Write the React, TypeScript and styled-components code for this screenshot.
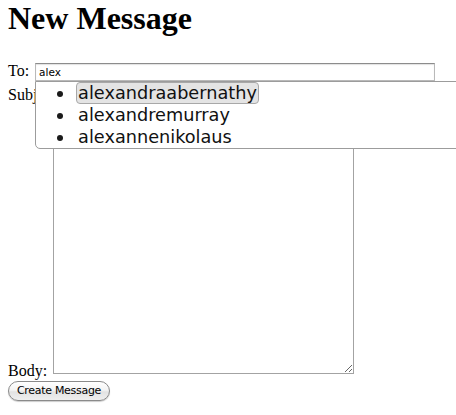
import React from "react";
import styled, { createGlobalStyle } from "styled-components";

const Global = createGlobalStyle`
  html { background: #fff; overflow-x: hidden; }
  body {
    margin: 0;
    font-family: "Liberation Serif", "Times New Roman", serif;
    font-size: 16px;
    color: #000;
  }
`;

const Page = styled.div`
  display: flex;
  flex-direction: column;
  padding: 0 8px;
  overflow: hidden;
`;

const Title = styled.h1`
  margin: 0;
  font-family: "Liberation Serif", serif;
  font-size: 32px;
  font-weight: bold;
  line-height: 37px;
  height: 37px;
`;

const Form = styled.form`
  display: flex;
  flex-direction: column;
  margin-top: 24px;
`;

const Row = styled.div<{ $align?: string; $top?: number }>`
  display: flex;
  align-items: ${(p) => p.$align || "baseline"};
  margin-top: ${(p) => p.$top || 0}px;
`;

const Label = styled.label<{ $lh?: number }>`
  font-family: "Liberation Serif", serif;
  font-size: 16px;
  line-height: ${(p) => p.$lh ?? 19}px;
`;

const FieldWrap = styled.div<{ $gap: number }>`
  position: relative;
  margin-left: ${(p) => p.$gap}px;
`;

const TextInput = styled.input<{ $width: number }>`
  display: block;
  box-sizing: border-box;
  width: ${(p) => p.$width}px;
  height: 18px;
  margin: 0;
  padding: 0 3px;
  border: 1px solid #b9b9b9;
  border-top-color: #8c8c8c;
  box-shadow: inset 0 1px 1px rgba(0, 0, 0, 0.12);
  font-family: "DejaVu Sans", sans-serif;
  font-size: 10.5px;
  color: #000;
  outline: none;
  background: #fff;
`;

const Dropdown = styled.div`
  position: absolute;
  left: 0;
  top: 100%;
  width: 420px;
  background: #fff;
  border: 1px solid #9c9c9c;
  border-radius: 0 0 0 5px;
  z-index: 2;
`;

const List = styled.ul`
  margin: 0;
  padding: 0 0 0 40px;
  list-style: none;
  font-family: "DejaVu Sans", sans-serif;
  font-size: 17.7px;
  color: #111;
`;

const Item = styled.li`
  position: relative;
  line-height: 20px;
  height: 22px;

  &::before {
    content: "";
    position: absolute;
    left: -19px;
    top: 9px;
    width: 6px;
    height: 6px;
    border-radius: 50%;
    background: #1a1a1a;
  }
`;

const Choice = styled.span<{ $selected?: boolean }>`
  display: inline-block;
  padding: 0 1px;
  border: 1px solid ${(p) => (p.$selected ? "#a8a8a8" : "transparent")};
  border-radius: 4px;
  background: ${(p) => (p.$selected ? "#e4e4e4" : "transparent")};
`;

const TextArea = styled.textarea`
  box-sizing: border-box;
  width: 301px;
  height: 267px;
  margin: 0 0 5px 6px;
  padding: 2px;
  border: 1px solid #a3a3a3;
  font-family: "DejaVu Sans", sans-serif;
  font-size: 11px;
  outline: none;
  background: #fff;
`;

const Button = styled.button`
  align-self: flex-start;
  box-sizing: border-box;
  width: 102px;
  height: 20px;
  margin: 2px 0 14px;
  padding: 0;
  border: 1px solid #8a8a8a;
  border-radius: 10px;
  background: linear-gradient(#ffffff 0%, #f4f4f4 45%, #e2e2e2 55%, #efefef 100%);
  box-shadow: 0 1px 1px rgba(0, 0, 0, 0.2);
  font-family: "DejaVu Sans", sans-serif;
  font-size: 11px;
  letter-spacing: -0.3px;
  color: #000;
  line-height: 18px;
`;

const suggestions = ["alexandraabernathy", "alexandremurray", "alexannenikolaus"];

export default function App() {
  return (
    <Page>
      <Global />
      <Title>New Message</Title>
      <Form onSubmit={(e) => e.preventDefault()}>
        <Row>
          <Label>To:</Label>
          <FieldWrap $gap={6}>
            <TextInput $width={400} defaultValue="alex" />
            <Dropdown>
              <List>
                {suggestions.map((s, i) => (
                  <Item key={s}>
                    <Choice $selected={i === 0}>{s}</Choice>
                  </Item>
                ))}
              </List>
            </Dropdown>
          </FieldWrap>
        </Row>
        <Row $top={4}>
          <Label>Subject:</Label>
          <FieldWrap $gap={6}>
            <TextInput $width={300} />
          </FieldWrap>
        </Row>
        <Row $align="flex-end" $top={2}>
          <Label $lh={16}>Body:</Label>
          <TextArea />
        </Row>
        <Button type="submit">Create Message</Button>
      </Form>
    </Page>
  );
}
